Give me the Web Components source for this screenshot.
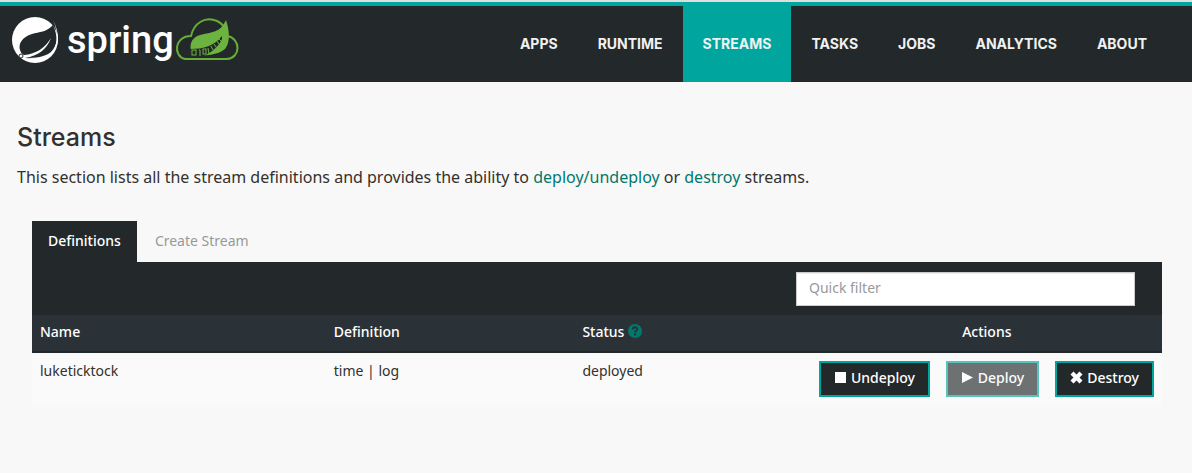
<!DOCTYPE html>
<html lang="en">
<head>
<meta charset="utf-8">
<title>Streams</title>
<style>
  body { margin: 0; background: #f8f8f8; color: #34302d; font: 14px/20px "Noto Sans", sans-serif; }
</style>
</head>
<body>
<dataflow-app></dataflow-app>
<script>
const define = (name, html) => {
  const template = document.createElement('template');
  template.innerHTML = html;
  customElements.define(name, class extends HTMLElement {
    constructor() {
      super();
      this.attachShadow({ mode: 'open' }).append(template.content.cloneNode(true));
    }
  });
};

define('spring-logo', `
<style>
  :host { display: block; }
  a { display: flex; align-items: center; color: #fff; text-decoration: none; font: 500 38px/48px Roboto, sans-serif; }
  span { margin: 0 1px 0 7px; }
</style>
<a href="#" aria-label="spring">
  <svg width="48" height="48" viewBox="0 0 48 48">
    <circle cx="23" cy="24" r="23" fill="#fff"/>
    <path d="M41 9C35 16 27 16 20 18 10 21 6 28 8 34c1 3 2 4 4 5 12-1 21-7 27-17-4 11-13 18-26 20 10 1 20 0 26-5 7-7 7-17 2-28z" fill="#23292b"/>
    <path d="M41 4c6 14 5 25-2 32-6 5-15 6-26 6 13 2 23 0 29-7 6-8 5-19-1-31z" fill="#fff"/>
    <circle cx="9" cy="40" r="2" fill="#fff" stroke="#23292b"/>
  </svg>
  <span>spring</span>
  <svg width="64" height="48" viewBox="0 0 64 48">
    <path d="M10 43C-2 40-1 20 16 20 19 7 30 0 42 5c4 2 7 5 9 9 1 2 1 4 1 6 14 2 14 22 0 23z" fill="none" stroke="#68ad35" stroke-width="2"/>
    <path d="M51 4c4 12 4 23-1 29-7 6-20 7-33 7-3-10-2-18 8-21 12-3 20-2 26-15z" fill="#6db33f"/>
    <path d="M15 33c14 0 24-3 32-13v3c-4 9-12 14-20 18H15z" fill="#23292b"/>
    <g fill="none" stroke="#6db33f">
      <rect x="17" y="34" width="4" height="5"/><path d="M25 34v6M24 34h1M33 32l1 6M36 30l2 4M39 28l2 3M42 25l2 3M44 23l2 2"/>
      <rect x="28" y="33" width="3" height="5"/>
    </g>
  </svg>
</a>`);

define('nav-item', `
<style>
  :host { display: block; }
  a { display: block; padding: 28px 20px; color: #f1f1f1; text-decoration: none; font: 700 14px/20px Inter, sans-serif; text-transform: uppercase; }
  :host([active]) a { background: #00a69e; }
</style>
<a href="#"><slot></slot></a>`);

define('app-header', `
<style>
  :host { display: block; border-top: 2px solid #dedede; }
  header { display: flex; justify-content: space-between; align-items: center; border-top: 4px solid #00a69e; background: #23292b; padding: 0 25px 0 12px; }
  nav { display: flex; }
  spring-logo { margin-bottom: 8px; }
</style>
<header>
  <spring-logo></spring-logo>
  <nav>
    <nav-item>Apps</nav-item><nav-item>Runtime</nav-item><nav-item active>Streams</nav-item><nav-item>Tasks</nav-item><nav-item>Jobs</nav-item><nav-item>Analytics</nav-item><nav-item>About</nav-item>
  </nav>
</header>`);

define('tab-bar', `
<style>
  :host { display: flex; gap: 2px; }
  button { border: 0; background: none; color: #999; font: inherit; padding: 10px 16px 11px; }
  button[aria-selected=true] { background: #23292b; color: #fff; font-weight: 500; }
</style>
<button role="tab" aria-selected="true">Definitions</button><button role="tab" aria-selected="false">Create Stream</button>`);

define('help-icon', `
<style>:host { display: inline-block; vertical-align: middle; margin-bottom: 4px; } svg { display: block; }</style>
<svg width="14" height="14" viewBox="0 0 14 14"><circle cx="7" cy="7" r="7" fill="#00796b"/><path d="M4.8 5.4C4.8 2.6 9.2 2.6 9.2 5.2 9.2 6.8 7 6.8 7 8.6" fill="none" stroke="#2a3237" stroke-width="2"/><path d="M6 9.6h2v2H6z" fill="#2a3237"/></svg>`);

customElements.define('action-button', class extends HTMLElement {
  constructor() {
    super();
    const icons = {
      stop: 'M1 1h11v11H1z',
      play: 'M1 1l11 5.500L1 12z',
      remove: 'M3.500 0.500L6.500 3.500 9.500 0.500 12.500 3.500 9.500 6.500 12.500 9.500 9.500 12.500 6.500 9.500 3.500 12.500 0.500 9.500 3.500 6.500 0.500 3.500z'
    };
    this.attachShadow({ mode: 'open' }).innerHTML = `
<style>
  :host { display: block; }
  button { display: flex; align-items: center; gap: 4px; padding: 5px 13px 7px; border: 2px solid #00a69e; background: #23292b; color: #fff; font: inherit; font-weight: 500; line-height: 20px; }
  button:disabled { opacity: .65; }
  svg { display: block; margin-bottom: 1px; }
</style>
<button${this.hasAttribute('disabled') ? ' disabled' : ''}><svg width="13" height="13" viewBox="0 0 13 13" fill="currentColor"><path d="${icons[this.getAttribute('icon')]}"/></svg><slot></slot></button>`;
  }
});

define('stream-table', `
<style>
  :host { display: block; }
  .filter { display: flex; justify-content: flex-end; background: #23292b; padding: 10px 27px 9px; }
  input { box-sizing: border-box; width: 30%; min-width: 339px; height: 34px; padding: 4px 12px 8px; border: 1px solid #ccc; background: #fff; font: inherit; color: #34302d; box-shadow: inset 0 1px 1px #00000013; }
  input::placeholder { color: #999; }
  table { width: 100%; table-layout: fixed; border-collapse: collapse; background: #fafafa; }
  th { box-sizing: border-box; background: #2a3237; color: #fff; font-weight: 500; text-align: left; padding: 7px 8px 9px; border-bottom: 2px solid #23292b; }
  td { padding: 8px; vertical-align: top; }
  th:last-child { text-align: center; }
  .name { width: 26%; } .definition { width: 22%; } .status { width: 21%; }
  .actions { display: flex; justify-content: flex-end; gap: 16px; }
</style>
<div class="filter"><input type="text" placeholder="Quick filter" aria-label="Quick filter"></div>
<table>
  <thead><tr><th class="name">Name</th><th class="definition">Definition</th><th class="status">Status <help-icon></help-icon></th><th>Actions</th></tr></thead>
  <tbody><tr><td>luketicktock</td><td>time | log</td><td>deployed</td>
    <td><div class="actions"><action-button icon="stop">Undeploy</action-button><action-button icon="play" disabled>Deploy</action-button><action-button icon="remove">Destroy</action-button></div></td></tr></tbody>
</table>`);

define('dataflow-app', `
<style>
  :host { display: block; }
  main { padding: 41px 30px 0 17px; }
  h1 { margin: 0 0 14px; font: 500 25px/28px Inter, sans-serif; }
  p { margin: 0 0 32px; font-size: 16px; line-height: 24px; }
  p a { color: #00796b; text-decoration: none; }
  section { padding-left: 15px; }
</style>
<app-header></app-header>
<main>
  <h1>Streams</h1>
  <p>This section lists all the stream definitions and provides the ability to <a href="#">deploy/undeploy</a> or <a href="#">destroy</a> streams.</p>
  <section><tab-bar role="tablist"></tab-bar><stream-table></stream-table></section>
</main>`);
</script>
</body>
</html>
